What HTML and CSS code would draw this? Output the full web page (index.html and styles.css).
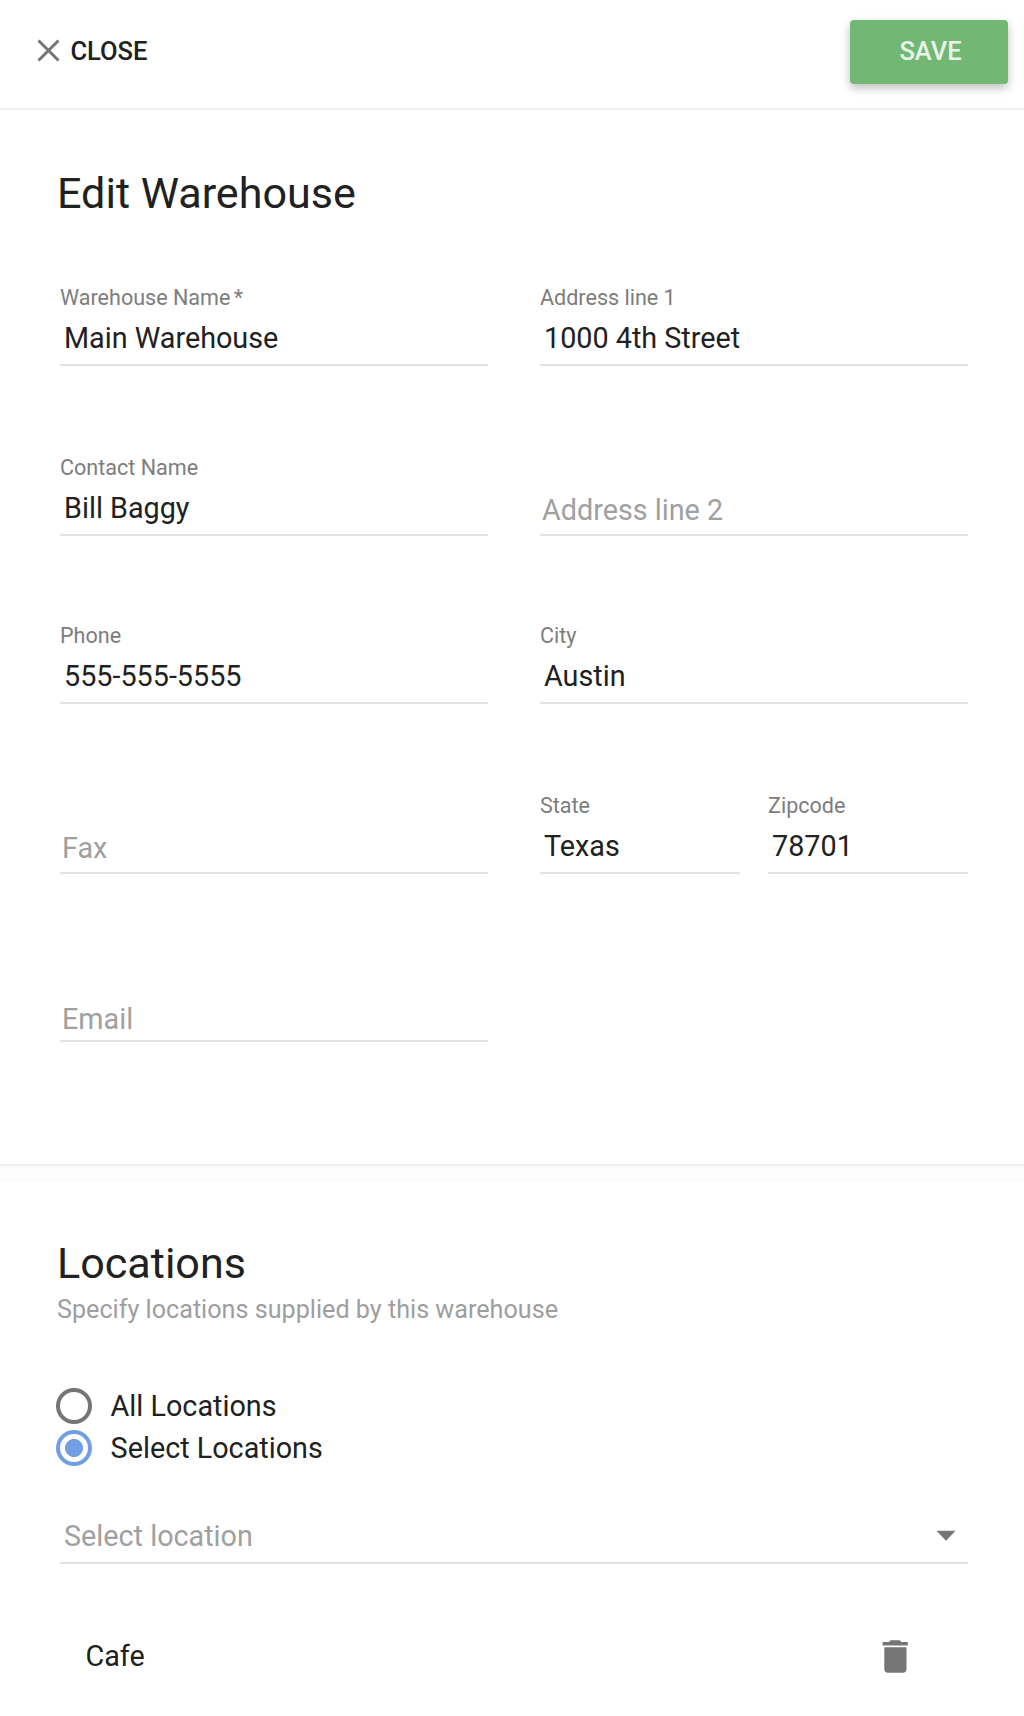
FILE: index.html
```html
<!DOCTYPE html>
<html lang="en">
<head>
<meta charset="utf-8">
<title>Edit Warehouse</title>
<link rel="stylesheet" href="styles.css">
</head>
<body>
<header class="toolbar">
  <button class="close" type="button">
    <svg class="close-icon" viewBox="-0.5 0.5 24 24"><path d="M2 2L22 22M22 2L2 22" fill="none" stroke="#757575" stroke-width="3"/></svg>
    <span>CLOSE</span>
  </button>
  <button class="save" type="button">SAVE</button>
</header>
<main>
  <section class="details">
    <h1 class="title">Edit Warehouse</h1>
    <div class="columns">
      <div class="column">
        <div class="field"><span class="label">Warehouse Name<span class="required">*</span></span><span class="value">Main Warehouse</span></div>
        <div class="field"><span class="label">Contact Name</span><span class="value">Bill Baggy</span></div>
        <div class="field"><span class="label">Phone</span><span class="value">555-555-5555</span></div>
        <div class="field"><span class="placeholder">Fax</span></div>
        <div class="field field-last"><span class="placeholder">Email</span></div>
      </div>
      <div class="column">
        <div class="field"><span class="label">Address line 1</span><span class="value">1000 4th Street</span></div>
        <div class="field"><span class="placeholder">Address line 2</span></div>
        <div class="field"><span class="label">City</span><span class="value">Austin</span></div>
        <div class="pair">
          <div class="field"><span class="label">State</span><span class="value">Texas</span></div>
          <div class="field"><span class="label">Zipcode</span><span class="value">78701</span></div>
        </div>
      </div>
    </div>
  </section>
  <section class="locations">
    <h2 class="title">Locations</h2>
    <p class="hint">Specify locations supplied by this warehouse</p>
    <div class="radios">
      <div class="radio"><span class="dot"></span><span>All Locations</span></div>
      <div class="radio"><span class="dot dot-on"></span><span>Select Locations</span></div>
    </div>
    <div class="select">
      <span>Select location</span>
      <svg class="arrow" viewBox="0 0 20 12"><path d="M.5 .7H19.5L10 10.7Z" fill="#757575"/></svg>
    </div>
    <div class="item">
      <span>Cafe</span>
      <svg class="trash" viewBox="0 0 26 34"><path d="M.6 2H7L8.7 .3H17.7L19.4 2H25.8V5.6H.6ZM2.3 7.2H24.5V29A3.7 3.7 0 0 1 20.8 32.7H6A3.7 3.7 0 0 1 2.3 29Z" fill="#757575"/></svg>
    </div>
  </section>
</main>
</body>
</html>
```
FILE: styles.css
```css
* { box-sizing: border-box; }
body {
  margin: 0;
  background: #fff;
  color: #212121;
  font: 400 28.75px/34px Roboto, "Liberation Sans", sans-serif;
  height: 1716px;
  overflow: hidden;
}
button { font: inherit; border: 0; padding: 0; background: none; color: inherit; }

.toolbar {
  height: 110px;
  border-bottom: 2px solid #eee;
  display: flex;
  justify-content: space-between;
  align-items: flex-start;
  padding: 20px 16px 0 36px;
}
.close {
  display: flex;
  align-items: center;
  gap: 10.4px;
  margin-top: 16px;
  font-weight: 500;
  font-size: 25.5px;
  line-height: 30px;
}
.close-icon { width: 24px; height: 24px; }
.save {
  width: 158px;
  height: 64px;
  border-radius: 4px;
  background: #72b874;
  color: rgba(255, 255, 255, .87);
  font-weight: 500;
  font-size: 25.5px;
  line-height: 30px;
  padding: 0 0 2px 3px;
  box-shadow: 0 4px 10px rgba(0, 0, 0, .26);
}

.title { margin: 0; font-size: 43.1px; line-height: 51px; font-weight: 400; }

.details { height: 1056px; border-bottom: 2px solid #eee; padding: 58px 56px 0 57px; }
.columns { display: flex; gap: 52px; padding: 57px 0 0 3px; }
.column { width: 428px; }
.field {
  height: 90px;
  border-bottom: 2px solid #e2e2e2;
  display: flex;
  flex-direction: column;
  margin-bottom: 80px;
}
.column > .field:nth-child(2) { margin-bottom: 78px; }
.label { font-size: 21.55px; line-height: 25px; color: #7d7d7d; padding: 9px 0 11px; }
.required { margin-left: 3.4px; }
.value { padding: 0 4px; }
.placeholder { color: #a0a0a0; padding: 47px 2px 0; }
.field-last { height: 88px; }
.field-last .placeholder { padding-top: 48px; }
.pair { display: flex; gap: 28px; }
.pair .field { width: 200px; }

.locations { border-top: 16px solid #fcfcfc; padding: 56px 56px 0 57px; }
.hint { margin: 6px 0 0; font-size: 25.17px; line-height: 29px; color: #9e9e9e; }
.radios { padding: 64px 0 0; margin-left: -1px; display: flex; flex-direction: column; gap: 6px; }
.radio { display: flex; align-items: center; gap: 18.6px; height: 36px; }
.dot {
  width: 36px;
  height: 36px;
  border: 4px solid #757575;
  border-radius: 50%;
}
.dot-on {
  border-color: #729fe3;
  background: radial-gradient(circle, #729fe3 8.7px, transparent 9.3px);
}
.select {
  height: 64px;
  margin: 34px 0 0 3px;
  padding: 19px 12px 0 4px;
  border-bottom: 2px solid #e2e2e2;
  display: flex;
  justify-content: space-between;
  color: #a0a0a0;
}
.arrow { width: 20px; height: 12px; margin-top: 11px; }
.item { display: flex; justify-content: space-between; padding: 75px 60px 0 28.5px; }
.trash { width: 26px; height: 34px; margin-top: 1px; }
```
